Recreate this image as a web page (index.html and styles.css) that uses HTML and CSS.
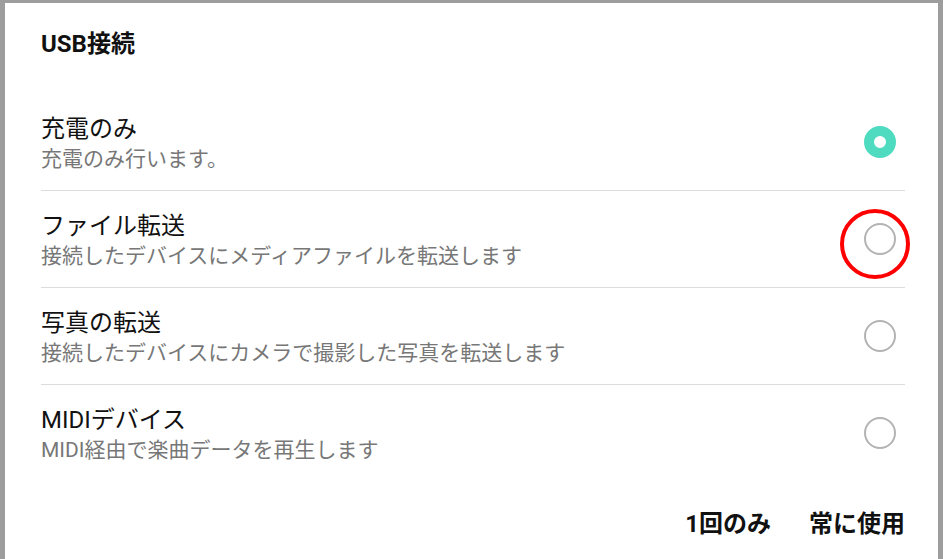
FILE: index.html
```html
<!DOCTYPE html>
<html lang="ja">
<head>
    <meta charset="UTF-8">
    <meta name="viewport" content="width=device-width, initial-scale=1.0">
    <title>USB接続</title>
    <link rel="stylesheet" href="styles.css">
</head>
<body>
    <div class="dialog">
        <h1 class="dialog-title">USB接続</h1>

        <ul class="options">
            <li class="option">
                <div class="option-text">
                    <div class="option-name">充電のみ</div>
                    <div class="option-desc">充電のみ行います。</div>
                </div>
                <span class="radio checked"></span>
            </li>
            <li class="option">
                <div class="option-text">
                    <div class="option-name">ファイル転送</div>
                    <div class="option-desc">接続したデバイスにメディアファイルを転送します</div>
                </div>
                <span class="radio">
                    <span class="highlight"></span>
                </span>
            </li>
            <li class="option">
                <div class="option-text">
                    <div class="option-name">写真の転送</div>
                    <div class="option-desc">接続したデバイスにカメラで撮影した写真を転送します</div>
                </div>
                <span class="radio"></span>
            </li>
            <li class="option">
                <div class="option-text">
                    <div class="option-name">MIDIデバイス</div>
                    <div class="option-desc">MIDI経由で楽曲データを再生します</div>
                </div>
                <span class="radio"></span>
            </li>
        </ul>

        <div class="actions">
            <a class="action" href="#">1回のみ</a>
            <a class="action" href="#">常に使用</a>
        </div>
    </div>
</body>
</html>
```

FILE: styles.css
```css
html, body {
    height: 100%;
}
body {
    margin: 0;
    padding: 3px 5px 0 5px;
    box-sizing: border-box;
    background: #9d9d9d;
    font-family: Roboto, "Noto Sans CJK JP", sans-serif;
    overflow: hidden;
}
.dialog {
    background: #fff;
    min-height: 100%;
    padding: 26px 33px 0 36px;
    box-sizing: border-box;
}
.dialog-title {
    margin: 0;
    font-size: 24px;
    line-height: 30px;
    font-weight: 700;
    color: #111;
}
.options {
    list-style: none;
    margin: 35px 0 0 0;
    padding: 0;
}
.option {
    display: flex;
    align-items: center;
    height: 96px;
    border-bottom: 1px solid #dcdcdc;
}
.option:last-child {
    border-bottom: none;
}
.option-text {
    flex: 1;
    padding-top: 4px;
}
.option-name {
    font-size: 24px;
    line-height: 30px;
    color: #111;
}
.option-desc {
    font-size: 21px;
    line-height: 30px;
    color: #777;
}
.radio {
    position: relative;
    width: 32px;
    height: 32px;
    margin-right: 9px;
    border: 2.5px solid #b3b3b3;
    border-radius: 50%;
    box-sizing: border-box;
}
.radio.checked {
    border: 10px solid #4fdbc0;
}
.highlight {
    position: absolute;
    left: -26px;
    top: -16px;
    width: 70px;
    height: 70px;
    border: 4px solid #f00;
    border-radius: 50%;
    box-sizing: border-box;
}
.actions {
    display: flex;
    justify-content: flex-end;
    gap: 38px;
    margin-top: 28px;
}
.action {
    font-size: 24px;
    line-height: 30px;
    font-weight: 700;
    color: #111;
    text-decoration: none;
}
```
